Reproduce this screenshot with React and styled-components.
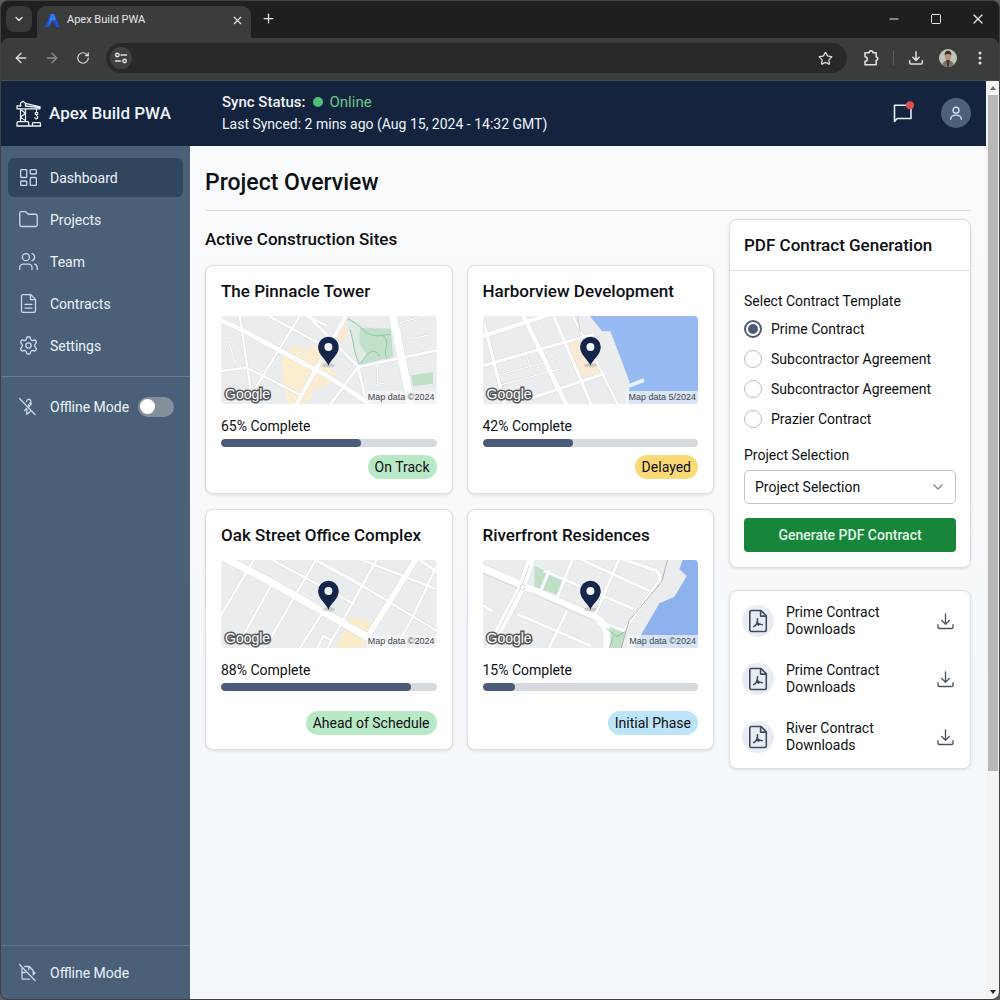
import React from "react";
import styled, { createGlobalStyle, css } from "styled-components";
import {
  ArrowLeft,
  ArrowRight,
  ChevronDown,
  Folder,
  LayoutDashboard,
  Minus,
  Plus,
  RotateCw,
  Settings,
  Square,
  Star,
  Users,
  X,
} from "lucide-react";

const GlobalStyle = createGlobalStyle`
  *, *::before, *::after { box-sizing: border-box; }
  body {
    margin: 0;
    background: #5c5e5e;
    font-family: Roboto, "Liberation Sans", sans-serif;
    font-size: 14px;
    line-height: 20px;
    color: #0d0f12;
  }
  h1, h2, h3, p, ul, fieldset { margin: 0; padding: 0; border: 0; }
  ul { list-style: none; }
  button, input, select { font: inherit; color: inherit; }
  button { border: 0; padding: 0; background: none; cursor: pointer; }
  svg { display: block; flex: none; }
`;

/* ---------- browser frame ---------- */

const BrowserWindow = styled.div`
  display: flex;
  flex-direction: column;
  min-height: 100vh;
  border: 1px solid #3f4142;
  border-radius: 8px;
  overflow: hidden;
  background: #1e201f;
`;

const TabStrip = styled.div`
  display: flex;
  align-items: center;
  height: 37px;
  padding: 0 11px 2px 5px;
  color: #e6e7e8;
`;

const TabMenuButton = styled.button`
  display: grid;
  place-items: center;
  width: 26px;
  height: 26px;
  border-radius: 8px;
  background: #383a3a;
`;

const Tab = styled.div`
  display: flex;
  align-items: center;
  align-self: flex-end;
  width: 214px;
  height: 32px;
  margin: 0 0 -2px 5px;
  padding: 0 7px 4px 8px;
  gap: 7px;
  border-radius: 9px 9px 0 0;
  background: #3b3d3d;
  font-size: 11px;
`;

const TabTitle = styled.span`
  flex: 1;
`;

const IconButton = styled.button`
  display: grid;
  place-items: center;
  width: ${(p) => p.$size || 20}px;
  height: ${(p) => p.$size || 20}px;
  color: ${(p) => p.$color || "inherit"};
`;

const NewTab = styled(IconButton)`
  margin-left: 7px;
`;

const WindowControls = styled.div`
  display: flex;
  gap: 22px;
  margin-left: auto;
`;

const Toolbar = styled.div`
  display: flex;
  align-items: center;
  height: 43px;
  padding: 0 9px 2px 10px;
  background: #3b3d3d;
  border-bottom: 1px solid #4a4c4e;
  border-radius: 8px 8px 0 0;
  color: #dcdedf;
`;

const NavButtons = styled.div`
  display: flex;
  gap: 11px;
`;

const AddressBar = styled.div`
  display: flex;
  flex: 1;
  align-items: center;
  height: 30px;
  margin-left: 13px;
  padding: 0 13px 0 4px;
  border-radius: 15px;
  background: #282a2a;
`;

const SiteInfo = styled.button`
  display: grid;
  place-items: center;
  width: 22px;
  height: 22px;
  border-radius: 50%;
  background: #3f4141;
`;

const AddressInput = styled.input`
  flex: 1;
  min-width: 0;
  margin: 0 8px;
  border: 0;
  outline: 0;
  background: transparent;
`;

const ToolbarActions = styled.div`
  display: flex;
  align-items: center;
  gap: 12px;
  margin-left: 14px;
`;

const ToolbarDivider = styled.span`
  width: 1px;
  height: 14px;
  background: #5b5d5e;
`;

const Viewport = styled.div`
  display: flex;
  flex: 1;
`;

const Scrollbar = styled.div`
  display: flex;
  flex-direction: column;
  align-items: center;
  width: 13px;
  background: #f4f4f4;
  color: #707070;
`;

const ScrollArrow = styled.span`
  display: grid;
  place-items: center;
  width: 12px;
  height: 14px;
`;

const ScrollTrack = styled.div`
  flex: 1;
  width: 10px;
`;

const ScrollThumb = styled.div`
  height: 76%;
  background: #b8b8b9;
`;

/* ---------- application shell ---------- */

const Shell = styled.div`
  display: flex;
  flex: 1;
  flex-direction: column;
  min-width: 0;
`;

const Header = styled.header`
  display: flex;
  align-items: center;
  height: 65px;
  padding: 0 15px 1px 14px;
  background: #14243e;
  color: #eef3fa;
`;

const Brand = styled.div`
  display: flex;
  align-items: center;
  gap: 7px;
  width: 207px;
  font-size: 17px;
  font-weight: 500;
`;

const Sync = styled.div`
  flex: 1;
  font-size: 14px;
  line-height: 22px;
`;

const SyncHeading = styled.p`
  display: flex;
  align-items: center;
  gap: 7px;
  font-size: 15px;
  font-weight: 500;
`;

const Online = styled.span`
  display: inline-flex;
  align-items: center;
  gap: 7px;
  color: #6cc78c;
  font-weight: 400;

  &::before {
    content: "";
    width: 10px;
    height: 10px;
    border-radius: 50%;
    background: #52bf76;
  }
`;

const HeaderActions = styled.div`
  display: flex;
  align-items: center;
  gap: 26px;
`;

const Avatar = styled.button`
  display: grid;
  place-items: center;
  width: 30px;
  height: 30px;
  border-radius: 50%;
  background: #4d607b;
  color: #d9e6f6;
`;

const Columns = styled.div`
  display: flex;
  flex: 1;
`;

const Sidebar = styled.nav`
  display: flex;
  flex: none;
  flex-direction: column;
  width: 189px;
  background: #4a6079;
  color: #edf3fa;
`;

const NavList = styled.ul`
  display: flex;
  flex-direction: column;
  gap: 3px;
  padding: 12px 7px 11px;
`;

const rowStyle = css`
  display: flex;
  align-items: center;
  gap: 11px;
  height: 39px;
  padding: 0 10px;
  border-radius: 6px;

  svg { color: #cbd9ea; }
`;

const NavLink = styled.a`
  ${rowStyle}
  color: inherit;
  text-decoration: none;
  background: ${(p) => (p.$active ? "#31465f" : "transparent")};
`;

const OfflineSection = styled.div`
  padding: 10px 7px;
  border-top: 1px solid #697c93;
`;

const OfflineRow = styled.label`
  ${rowStyle}
`;

const OfflineFooter = styled.div`
  margin-top: auto;
  padding: 7px;
  border-top: 1px solid #63768d;
`;

const Switch = styled.input`
  appearance: none;
  display: flex;
  align-items: center;
  width: 36px;
  height: 20px;
  margin: 0 -2px;
  padding: 0 2px;
  border-radius: 10px;
  background: #858e9b;

  &::before {
    content: "";
    width: 15px;
    height: 15px;
    border-radius: 50%;
    background: #fff;
  }
  &:checked { justify-content: flex-end; background: #4fc878; }
`;

/* ---------- page content ---------- */

const Main = styled.main`
  flex: 1;
  min-width: 0;
  padding: 22px 15px 22px;
  background: linear-gradient(#f9fafb, #f4f8fb);
`;

const PageTitle = styled.h1`
  padding-bottom: 12px;
  border-bottom: 1px solid #dbdfe3;
  font-size: 23px;
  font-weight: 500;
  line-height: 30px;
`;

const Content = styled.div`
  display: grid;
  grid-template-columns: minmax(0, 1fr) 242px;
  gap: 15px;
  align-items: start;
  padding-top: 8px;
`;

const Sites = styled.section`
  padding-top: 8px;
`;

const SectionTitle = styled.h2`
  font-size: 17px;
  font-weight: 500;
  line-height: 24px;
`;

const SiteGrid = styled.div`
  display: grid;
  grid-template-columns: repeat(2, minmax(0, 1fr));
  gap: 15px 14px;
  margin-top: 14px;
`;

const Card = styled.section`
  border: 1px solid #dcdfe3;
  border-radius: 8px;
  background: #fff;
  box-shadow: 0 1px 3px rgba(20, 30, 50, 0.12);
`;

const SiteCard = styled(Card)`
  display: flex;
  flex-direction: column;
  padding: 14px 15px;
`;

const CardTitle = styled.h3`
  font-size: 17px;
  font-weight: 500;
  line-height: 22px;
`;

const MapFrame = styled.div`
  position: relative;
  height: 88px;
  margin: 14px 0 12px;
  border-radius: 4px;
  overflow: hidden;

  > svg { width: 100%; height: 100%; }
`;

const Logo = styled.span`
  position: absolute;
  left: 4px;
  bottom: 1px;
  font-family: "Liberation Sans", Arial, sans-serif;
  font-size: 14px;
  line-height: 18px;
  color: #fff;
  -webkit-text-stroke: 3px #55585c;
  paint-order: stroke fill;
`;

const Attribution = styled.span`
  position: absolute;
  right: 0;
  bottom: 0;
  padding: 0 2px;
  background: rgba(245, 246, 248, 0.7);
  font-family: "Liberation Sans", Arial, sans-serif;
  font-size: 9px;
  line-height: 13px;
  color: #44474b;
`;

const Meter = styled.div`
  height: 8px;
  margin-top: 3px;
  border-radius: 4px;
  background: #d6dadf;
  overflow: hidden;
`;

const MeterFill = styled.div`
  height: 100%;
  border-radius: 4px;
  background: #4a5c7a;
`;

const tones = { green: "#b9e8c7", amber: "#fad977", blue: "#bde4f8" };

const Badge = styled.span`
  align-self: flex-end;
  margin-top: ${(p) => (p.$spaced ? 20 : 8)}px;
  padding: 0 7px;
  border-radius: 12px;
  background: ${(p) => tones[p.$tone]};
  line-height: 24px;
`;

const SideColumn = styled.aside`
  display: flex;
  flex-direction: column;
  gap: 22px;
`;

const CardHeader = styled.div`
  padding: 14px;
  border-bottom: 1px solid #dcdfe3;
`;

const Form = styled.form`
  padding: 20px 14px 15px;
`;

const Legend = styled.legend`
  padding: 0 0 3px;
`;

const RadioRow = styled.label`
  display: flex;
  align-items: center;
  gap: 9px;
  height: 30px;
`;

const Radio = styled.input`
  appearance: none;
  display: grid;
  place-items: center;
  width: 18px;
  height: 18px;
  margin: 0;
  border: 1px solid #b9bcc0;
  border-radius: 50%;
  background: #fff;

  &:checked { border: 2px solid #4a5c7a; }
  &:checked::before {
    content: "";
    width: 10px;
    height: 10px;
    border-radius: 50%;
    background: #4a5c7a;
  }
`;

const FieldLabel = styled.label`
  display: block;
  margin: 11px 0 5px;
`;

const SelectBox = styled.div`
  position: relative;

  > svg {
    position: absolute;
    right: 10px;
    top: 9px;
    color: #7a7e84;
    pointer-events: none;
  }
`;

const Select = styled.select`
  appearance: none;
  display: block;
  width: 100%;
  height: 34px;
  padding: 0 10px;
  border: 1px solid #bfc3c8;
  border-radius: 5px;
  background: #fff;
`;

const PrimaryButton = styled.button`
  width: 100%;
  height: 34px;
  margin-top: 14px;
  border-radius: 4px;
  background: #17863b;
  color: #e3f6e8;
  font-weight: 500;
`;

const DownloadList = styled(Card)`
  display: flex;
  flex-direction: column;
  gap: 24px;
  padding: 13px 15px 14px 12px;
`;

const DownloadRow = styled.div`
  display: flex;
  align-items: center;
  gap: 12px;
  line-height: 17px;
`;

const FileBadge = styled.span`
  display: grid;
  place-items: center;
  width: 32px;
  height: 32px;
  border-radius: 50%;
  background: #e9edf3;
  color: #3f4a5e;
`;

const FileName = styled.span`
  flex: 1;
  max-width: 110px;
  margin-right: auto;
`;

/* ---------- drawings ---------- */

const Stroke = ({ size = 20, width = 1.5, children, label, box = 24 }) => (
  <svg
    width={size}
    height={size}
    viewBox={`0 0 ${box} ${box}`}
    fill="none"
    stroke="currentColor"
    strokeWidth={width}
    strokeLinecap="round"
    strokeLinejoin="round"
    aria-label={label}
    aria-hidden={label ? undefined : true}
  >
    {children}
  </svg>
);

const CraneIcon = () => (
  <Stroke size={27} width={1.3} box={27}>
    <path d="M5.500 6V3.200L8 1.200l2.500 2V6" />
    <path d="M10.500 3.400 25 6.800v2H2v-3h4M10.500 6 25 7.600" />
    <path d="M5.500 9v12.500M10.500 9v12.500M5.500 9.500l5 3.700-5 3.700 5 4" strokeWidth="1.200" />
    <path d="M2 26v-3.200c0-.7.500-1.200 1.200-1.200h9.300c.7 0 1.200.5 1.200 1.200V26zM17.500 26v-2.600c0-.5.400-.8.800-.8h6.400c.4 0 .8.300.8.800V26zM2 26h23.500" />
    <path d="M21.500 9v3.500M20.300 12.500h2.400v2h-2.400zM21.700 14.700v1.300c1.700.5 1.400 2.900-.3 2.900-.9 0-1.500-.6-1.500-1.300" strokeWidth="1.100" />
  </Stroke>
);

const ApexLogo = () => (
  <svg width="15" height="15" viewBox="0 0 15 15" aria-hidden="true">
    <path d="M5.600 1h3.200L15 14.200h-3.600L7.200 6.600 3.800 14.200H0z" fill="#1c51dc" />
    <path d="M5.600 1h3.200l2.400 5.200-3.400 1.600L7.200 6.600 3.800 14.200z" fill="#2f7df6" />
  </svg>
);

const DocumentIcon = ({ size, strokeWidth }) => (
  <Stroke size={size} width={strokeWidth}>
    <path d="M6 1.800h8.500L20 7.300v13c0 1.100-.9 1.900-1.900 1.900H6c-1.100 0-2-.9-2-1.900V3.700c0-1 .9-1.900 2-1.900z" />
    <path d="M14.300 2v5.500h5.500M8 13h8M8 17.200h8" />
  </Stroke>
);

const DownloadIcon = ({ size = 19, width = 1.7 }) => (
  <Stroke size={size} width={width}>
    <path d="M12 2.500v13M7.300 10.800l4.700 4.800 4.700-4.800M2.500 16v3c0 1.100.7 1.900 1.900 1.900h15.200c1.200 0 1.900-.8 1.900-1.900v-3" />
  </Stroke>
);

const PdfIcon = () => (
  <Stroke size={24} width={1.6}>
    <path d="M5.500 1.500h9.500l5.300 5.300v14c0 1-.7 1.700-1.700 1.700H5.500c-1 0-1.700-.7-1.700-1.700V3.200c0-1 .7-1.700 1.700-1.700z" />
    <path d="M14.600 1.800v5.300h5.400" />
    <path d="M11.500 9.800c.2 2.600.1 3.600-1 5.200-.8 1.100-1.700 2-2.800 2.600M11.600 13.800c1.300 1.400 2.600 1.900 4.700 1.900M10.800 15l2 1.100" />
  </Stroke>
);

const TuneIcon = () => (
  <Stroke size={14} width={1.5} box={14}>
    <circle cx="3.300" cy="4" r="1.700" />
    <path d="M7 4h5.500M1.500 10h5" />
    <circle cx="10.600" cy="10" r="1.700" />
  </Stroke>
);

const PuzzleIcon = () => (
  <Stroke size={18} width={1.6} box={18}>
    <path d="M3 3.800h4.200a1.900 1.900 0 0 1 3.800 0h3.200v4.200a1.600 1.600 0 0 1 0 3.200V15.800H3v-3.400a2.300 2.300 0 0 0 0-4.600z" />
  </Stroke>
);

const MessageIcon = () => (
  <svg width="24" height="24" viewBox="0 0 24 24" fill="none" aria-hidden="true">
    <path d="M3.500 20.500V4.300h16.500v13.200H6.200z" stroke="#e6eefa" strokeWidth="1.600" strokeLinejoin="round" />
    <circle cx="19" cy="4.200" r="4" fill="#e0504f" />
  </svg>
);

const PersonIcon = () => (
  <Stroke size={14} width={1.5} box={16}>
    <circle cx="8" cy="4.800" r="3.400" />
    <path d="M2 15c0-3.200 2-4.500 6-4.500s6 1.300 6 4.500" />
  </Stroke>
);

const ProfilePhoto = () => (
  <svg width="18" height="18" viewBox="0 0 18 18" aria-hidden="true">
    <defs>
      <clipPath id="photo"><circle cx="9" cy="9" r="9" /></clipPath>
    </defs>
    <g clipPath="url(#photo)">
      <rect width="18" height="18" fill="#bfc3ba" />
      <path d="M3 18c0-4 2-6.500 6-6.500s6 2.500 6 6.500z" fill="#7d716a" />
      <path d="M7.300 11h3.400l-1.200 7h-1z" fill="#3d332f" />
      <ellipse cx="9" cy="7.300" rx="3" ry="4" fill="#b58f7a" />
      <path d="M5.800 6.500C5.500 3 7 1.800 9.200 1.800s3.500 1.500 3 4.700C11 4.600 7.500 4.400 5.800 6.500z" fill="#3d302a" />
    </g>
  </svg>
);

const KebabIcon = () => (
  <svg width="16" height="16" viewBox="0 0 16 16" fill="currentColor" aria-hidden="true">
    <circle cx="8" cy="3" r="1.500" />
    <circle cx="8" cy="8" r="1.500" />
    <circle cx="8" cy="13" r="1.500" />
  </svg>
);

const OfflineIcon = () => (
  <Stroke size={21} width={1.3} box={21}>
    <path d="M1.500 2.500 17 18.500" />
    <path d="M8.500 5.500a2.200 2.200 0 1 1 3.300 1.900M13.500 7.500l-2.300 3.200M10.600 8.600v1M8.800 12.500v5.800l3.600-3M8.800 12.500l-2.300 2" />
  </Stroke>
);

const OfflineFileIcon = () => (
  <Stroke size={21} width={1.3} box={21}>
    <path d="M1.500 2.500 17 18.500" />
    <path d="M4 6.500v9.800c0 .6.300.9.900.9h6.600M6.800 4.500h4.500l3.800 4v2.500M10.800 4.800v3M4 10.500h3.200M15.300 9.500l1.700 1.500-2 1.800" />
  </Stroke>
);

const Pin = () => (
  <g>
    <ellipse cx="323" cy="148" rx="20" ry="6" fill="#5b6678" opacity="0.250" />
    <path d="M323 149c-7-19-31-32-31-56a31 31 0 0 1 62 0c0 24-24 37-31 56z" fill="#15264a" />
    <circle cx="323" cy="93" r="12" fill="#f4f6f9" />
  </g>
);

const Roads = ({ list }) => (
  <g fill="none" strokeLinejoin="round">
    {list.map(([w, d]) => <path key={d} d={d} stroke="#d9dbde" strokeWidth={w + 3} />)}
    {list.map(([w, d]) => <path key={d} d={d} stroke="#fff" strokeWidth={w} />)}
  </g>
);

const MapSvg = ({ children }) => (
  <svg viewBox="0 0 648 264" preserveAspectRatio="xMidYMid slice" aria-hidden="true">
    <rect width="648" height="264" fill="#ebecee" />
    {children}
    <Pin />
  </svg>
);

const PinnacleMap = () => (
  <MapSvg>
    <path d="M183 140q10-45 50-48 22 22 50-5 20 20 25 60 34 10 37 40-25 28-65 30-3 30-30 47h-50q-8-34-17-124z" fill="#fbeed0" />
    <path d="M345 60l28-42 10 30-18 38z" fill="#fae9d8" />
    <path d="M374 3l66 30 70 5 7 84-102 26-20-78z" fill="#dfeae2" />
    <path d="M418 36l92 2 7 84-100 24 20-30-22-36z" fill="#c1e0ca" />
    <path d="M572 178l65-10v35l-60 8z" fill="#bfe0c8" />
    <g fill="none" stroke="#8fc6ae" strokeWidth="3">
      <path d="M376 5c40 18 50 45 78 52s40-5 56 0M388 40c12 40 10 70 28 104l24-28M440 116c15-14 25-14 38 4M488 60c22 20-2 40 10 68" />
    </g>
    <Roads
      list={[
        [3, "M0 82l24-6 20 70M470 140v60l25 4M538 60l0-40 80-22M560 70l60-12M590 150l60-14"],
        [7, "M57 0l32 215M0 165l77-10 170 86M237 0L105 215M144 0l150 82M240-10l80 40"],
        [8, "M262 0l150 151 20 90M330 264l82-111 237-50"],
        [12, "M225 268L378-4"],
        [14, "M-5 11l72 32 110 60 140 75 130 86"],
        [24, "M515-5l50 240 4 34"],
      ]}
    />
  </MapSvg>
);

const HarborMap = () => (
  <MapSvg>
    <path d="M258 78l55-13 40 108-68 17z" fill="#faead5" />
    <Roads
      list={[
        [3, "M45 178l175-48M130 112l12 42M50 208l185-50"],
        [6, "M270 0l60 115 75 150"],
        [9, "M0 150l170-50 160-44M5 25l45 180 15 60M213 0l112 265M140 248l225-75"],
        [12, "M0 60L200-4"],
        [14, "M120-5l115 240 20 40"],
      ]}
    />
    <path d="M320-2l38 48h25l57 150-2 72h214V-2z" fill="#96baf1" />
    <path d="M438 210l46-18" stroke="#e8f0fb" strokeWidth="12" />
    <path d="M283-5l10 55" stroke="#c7cacf" strokeWidth="3" />
  </MapSvg>
);

const OakMap = () => (
  <MapSvg>
    <path d="M387 168l83 25-28 42-26 30h-70z" fill="#fbeccb" />
    <Roads
      list={[
        [7, "M102-5L0 168M150 78L60 240M285 0L130 268M310 150l-75 118M470-5L318 268M155 0l245 132M280-2l150 82 222 135M420-2l230 90M649 15l-75 160-52 92M290 262l18-34 28 16"],
        [9, "M285 0l145 80M590-5l60 42"],
        [17, "M587-5L440 232"],
        [22, "M0-12l150 78 220 125 90 52 30 28"],
      ]}
    />
  </MapSvg>
);

const RiverMap = () => (
  <MapSvg>
    <path d="M155 18l90 40-17 47-73-25z" fill="#bfdfc7" />
    <path d="M363 196l68 10-16 60h-45z" fill="#bfdfc7" />
    <Roads
      list={[
        [8, "M200 30l-25 60M270-4l-46 116M410-4l-75 172M183 32l277 118M285-6l215 98M105 163l220 95M253 152l-55 114M370 90l-35 80M0 135l30 20"],
        [9, "M415-4l100 34q24 10 14 34L438 190l-14 22-60-22"],
        [22, "M-5 22l128 56 205 90q44 18 44 60v42"],
        [24, "M145-5L118 80 15 275"],
      ]}
    />
    <path d="M555-2l-18 66-98 118-24 84" fill="none" stroke="#a3a6ab" strokeWidth="2.500" />
    <path d="M0 40l105 45M140 15l-22 60-98 190M145 98l200 88" fill="none" stroke="#d6d9dd" strokeWidth="3" />
    <circle cx="120" cy="82" r="8" fill="#fff" stroke="#cfd2d6" strokeWidth="3" />
    <path d="M372 206l30 24 26-16M392 228l-12 36" fill="none" stroke="#90c4a4" strokeWidth="3" />
    <path d="M600-2l-10 30 22 20-37 62-45 20-55 95-25 40h200V-2z" fill="#8eb2ee" />
  </MapSvg>
);

/* ---------- data ---------- */

const navItems = [
  { label: "Dashboard", icon: LayoutDashboard, active: true },
  { label: "Projects", icon: Folder },
  { label: "Team", icon: Users },
  { label: "Contracts", icon: DocumentIcon },
  { label: "Settings", icon: Settings },
];

const sites = [
  { name: "The Pinnacle Tower", map: PinnacleMap, credit: "Map data ©2024", done: 65, status: "On Track", tone: "green" },
  { name: "Harborview Development", map: HarborMap, credit: "Map data 5/2024", done: 42, status: "Delayed", tone: "amber" },
  { name: "Oak Street Office Complex", map: OakMap, credit: "Map data ©2024", done: 88, status: "Ahead of Schedule", tone: "green", spaced: true },
  { name: "Riverfront Residences", map: RiverMap, credit: "Map data ©2024", done: 15, status: "Initial Phase", tone: "blue", spaced: true },
];

const templates = ["Prime Contract", "Subcontractor Agreement", "Subcontractor Agreement", "Prazier Contract"];
const downloads = ["Prime Contract Downloads", "Prime Contract Downloads", "River Contract Downloads"];

/* ---------- composition ---------- */

const BrowserChrome = () => (
  <>
    <TabStrip>
      <TabMenuButton aria-label="Search tabs"><ChevronDown size={12} strokeWidth={2.5} /></TabMenuButton>
      <Tab>
        <ApexLogo />
        <TabTitle>Apex Build PWA</TabTitle>
        <IconButton $size={14} aria-label="Close tab"><X size={13} /></IconButton>
      </Tab>
      <NewTab aria-label="New tab"><Plus size={15} /></NewTab>
      <WindowControls>
        <IconButton aria-label="Minimize"><Minus size={14} strokeWidth={1.8} /></IconButton>
        <IconButton aria-label="Maximize"><Square size={12} /></IconButton>
        <IconButton aria-label="Close"><X size={16} strokeWidth={1.8} /></IconButton>
      </WindowControls>
    </TabStrip>
    <Toolbar>
      <NavButtons>
        <IconButton aria-label="Back"><ArrowLeft size={16} /></IconButton>
        <IconButton $color="#8a8c8d" aria-label="Forward"><ArrowRight size={16} /></IconButton>
        <IconButton aria-label="Reload"><RotateCw size={14} /></IconButton>
      </NavButtons>
      <AddressBar>
        <SiteInfo aria-label="Site information"><TuneIcon /></SiteInfo>
        <AddressInput type="text" aria-label="Address" />
        <IconButton $size={18} aria-label="Bookmark"><Star size={15} /></IconButton>
      </AddressBar>
      <ToolbarActions>
        <IconButton aria-label="Extensions"><PuzzleIcon /></IconButton>
        <ToolbarDivider />
        <IconButton aria-label="Downloads"><DownloadIcon size={16} width={2.3} /></IconButton>
        <IconButton aria-label="Profile"><ProfilePhoto /></IconButton>
        <IconButton aria-label="Menu"><KebabIcon /></IconButton>
      </ToolbarActions>
    </Toolbar>
  </>
);

const AppHeader = () => (
  <Header>
    <Brand><CraneIcon />Apex Build PWA</Brand>
    <Sync>
      <SyncHeading>Sync Status: <Online>Online</Online></SyncHeading>
      <p>Last Synced: 2 mins ago (Aug 15, 2024 - 14:32 GMT)</p>
    </Sync>
    <HeaderActions>
      <IconButton $size={24} aria-label="Messages"><MessageIcon /></IconButton>
      <Avatar aria-label="Account"><PersonIcon /></Avatar>
    </HeaderActions>
  </Header>
);

const AppSidebar = () => (
  <Sidebar>
    <NavList>
      {navItems.map(({ label, icon: Icon, active }) => (
        <li key={label}>
          <NavLink href="#" $active={active} aria-current={active ? "page" : undefined}>
            <Icon size={21} strokeWidth={1.5} />
            {label}
          </NavLink>
        </li>
      ))}
    </NavList>
    <OfflineSection>
      <OfflineRow>
        <OfflineIcon />
        Offline Mode
        <Switch type="checkbox" role="switch" />
      </OfflineRow>
    </OfflineSection>
    <OfflineFooter>
      <NavLink href="#"><OfflineFileIcon />Offline Mode</NavLink>
    </OfflineFooter>
  </Sidebar>
);

const Site = ({ site }) => {
  const Map = site.map;
  return (
    <SiteCard>
      <CardTitle>{site.name}</CardTitle>
      <MapFrame>
        <Map />
        <Logo>Google</Logo>
        <Attribution>{site.credit}</Attribution>
      </MapFrame>
      <p>{site.done}% Complete</p>
      <Meter role="progressbar" aria-label={site.name} aria-valuenow={site.done} aria-valuemin={0} aria-valuemax={100}>
        <MeterFill style={{ width: `${site.done}%` }} />
      </Meter>
      <Badge $tone={site.tone} $spaced={site.spaced}>{site.status}</Badge>
    </SiteCard>
  );
};

const ContractForm = () => (
  <Card>
    <CardHeader><CardTitle as="h2">PDF Contract Generation</CardTitle></CardHeader>
    <Form onSubmit={(e) => e.preventDefault()}>
      <fieldset>
        <Legend>Select Contract Template</Legend>
        {templates.map((name, i) => (
          <RadioRow key={i}>
            <Radio type="radio" name="template" value={i} defaultChecked={i === 0} />
            {name}
          </RadioRow>
        ))}
      </fieldset>
      <FieldLabel htmlFor="project">Project Selection</FieldLabel>
      <SelectBox>
        <Select id="project">
          <option>Project Selection</option>
        </Select>
        <ChevronDown size={16} strokeWidth={1.8} />
      </SelectBox>
      <PrimaryButton type="submit">Generate PDF Contract</PrimaryButton>
    </Form>
  </Card>
);

export default function App() {
  return (
    <>
      <GlobalStyle />
      <BrowserWindow>
        <BrowserChrome />
        <Viewport>
          <Shell>
            <AppHeader />
            <Columns>
              <AppSidebar />
              <Main>
                <PageTitle>Project Overview</PageTitle>
                <Content>
                  <Sites>
                    <SectionTitle>Active Construction Sites</SectionTitle>
                    <SiteGrid>
                      {sites.map((site) => <Site key={site.name} site={site} />)}
                    </SiteGrid>
                  </Sites>
                  <SideColumn>
                    <ContractForm />
                    <DownloadList>
                      {downloads.map((name, i) => (
                        <DownloadRow key={i}>
                          <FileBadge><PdfIcon /></FileBadge>
                          <FileName>{name}</FileName>
                          <IconButton $color="#4b5362" aria-label={`Download ${name}`}>
                            <DownloadIcon />
                          </IconButton>
                        </DownloadRow>
                      ))}
                    </DownloadList>
                  </SideColumn>
                </Content>
              </Main>
            </Columns>
          </Shell>
          <Scrollbar aria-hidden="true">
            <ScrollArrow>
              <svg width="6" height="4" viewBox="0 0 6 4"><path d="M0 4l3-4 3 4z" fill="currentColor" /></svg>
            </ScrollArrow>
            <ScrollTrack><ScrollThumb /></ScrollTrack>
            <ScrollArrow>
              <svg width="6" height="4" viewBox="0 0 6 4"><path d="M0 0l3 4 3-4z" fill="#222" /></svg>
            </ScrollArrow>
          </Scrollbar>
        </Viewport>
      </BrowserWindow>
    </>
  );
}
